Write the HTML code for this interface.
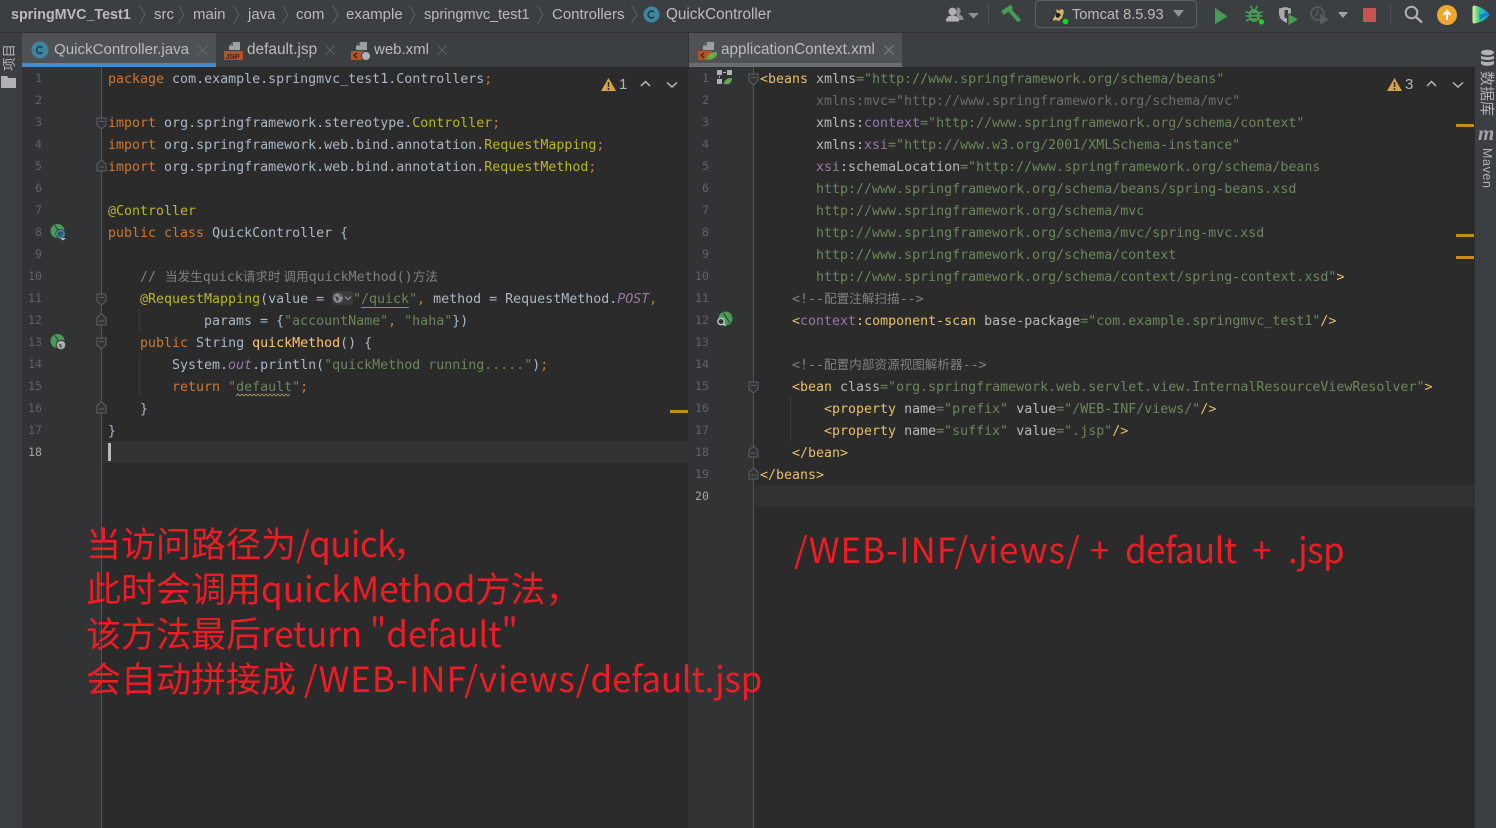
<!DOCTYPE html>
<html lang="zh"><head><meta charset="utf-8"><title>QuickController</title>
<style>
html,body{margin:0;padding:0;background:#2b2b2b}
#p{position:relative;width:1496px;height:828px;overflow:hidden;background:#2b2b2b;font-family:"Liberation Sans","Noto Sans CJK SC",sans-serif}
.a{position:absolute;white-space:nowrap}
.b{position:absolute}
.ui{font-size:15px;color:#bbb;line-height:20px}
.cr{position:absolute;top:5px}
.l{position:absolute;white-space:pre;height:22px;line-height:22px;margin-top:2px;font-family:"DejaVu Sans Mono","Noto Sans CJK SC",monospace;font-size:13.3px;color:#a9b7c6}
.l.cj{margin-top:0}
.l i.z{font-family:"Noto Sans CJK SC",sans-serif;font-style:normal;font-size:12.6px}
.n{position:absolute;width:30px;text-align:right;height:22px;line-height:22px;font-family:"DejaVu Sans Mono",monospace;font-size:11.6px;color:#606366}
.k{color:#cc7832}.s{color:#6a8759}.an{color:#bbb529}.m{color:#ffc66d}.c{color:#808080}.t{color:#e8bf6a}.at{color:#bababa}.ns{color:#9876aa}.g{color:#6c6c6c}
.red{position:absolute;white-space:nowrap;color:#ee1c25;font-family:"Noto Sans CJK SC","Liberation Sans",sans-serif;font-size:35px;line-height:45px}
</style></head><body><div id="p">

<!-- top bar -->
<div class="b" style="left:0;top:0;width:1496px;height:32px;background:#3c3f41"></div>
<div class="b" style="left:0;top:32px;width:1496px;height:1px;background:#323232"></div>
<div class="a ui" style="left:11px;top:5px;font-weight:bold;font-size:14.3px;color:#bbb">springMVC_Test1</div>
<svg class="cr" style="left:139px" width="7" height="19"><path d="M.5 .5 6 9.500.5 18.500" fill="none" stroke="#5d6163"/></svg>
<div class="a ui" style="left:154px;top:5px">src</div>
<svg class="cr" style="left:178px" width="7" height="19"><path d="M.5 .5 6 9.500.5 18.500" fill="none" stroke="#5d6163"/></svg>
<div class="a ui" style="left:193px;top:5px">main</div>
<svg class="cr" style="left:233px" width="7" height="19"><path d="M.5 .5 6 9.500.5 18.500" fill="none" stroke="#5d6163"/></svg>
<div class="a ui" style="left:248px;top:5px">java</div>
<svg class="cr" style="left:282px" width="7" height="19"><path d="M.5 .5 6 9.500.5 18.500" fill="none" stroke="#5d6163"/></svg>
<div class="a ui" style="left:296px;top:5px">com</div>
<svg class="cr" style="left:332px" width="7" height="19"><path d="M.5 .5 6 9.500.5 18.500" fill="none" stroke="#5d6163"/></svg>
<div class="a ui" style="left:346px;top:5px">example</div>
<svg class="cr" style="left:409px" width="7" height="19"><path d="M.5 .5 6 9.500.5 18.500" fill="none" stroke="#5d6163"/></svg>
<div class="a ui" style="left:424px;top:5px;font-size:14.500px">springmvc_test1</div>
<svg class="cr" style="left:537px" width="7" height="19"><path d="M.5 .5 6 9.500.5 18.500" fill="none" stroke="#5d6163"/></svg>
<div class="a ui" style="left:552px;top:5px">Controllers</div>
<svg class="cr" style="left:631px" width="7" height="19"><path d="M.5 .5 6 9.500.5 18.500" fill="none" stroke="#5d6163"/></svg>
<svg class="b" style="left:643px;top:6px" width="17" height="17" viewBox="0 0 17 17"><circle cx="8.500" cy="8.500" r="8" fill="#3e86a0"/><path d="M11 6.200A3.400 3.400 0 1 0 11 10.800" fill="none" stroke="#1f3d4a" stroke-width="1.600"/></svg>
<div class="a ui" style="left:666px;top:5px;font-size:15.300px">QuickController</div>

<!-- toolbar -->
<svg class="b" style="left:946px;top:6px" width="33" height="18" viewBox="0 0 33 18"><path d="M11 1.500a3.800 3.800 0 0 1 2 7c2.500.6 4.500 2 4.500 5.500H12c0-3-1-4.500-2-5.500z" fill="#8d8f91"/><circle cx="6.500" cy="5.500" r="3.900" fill="#afb1b3"/><path d="M0 15.500c0-4.500 2.500-6 6.500-6s6.500 1.500 6.500 6z" fill="#afb1b3"/><path d="M22 7h11l-5.500 5.500z" fill="#8d8f91"/></svg>
<div class="b" style="left:988px;top:3px;width:1px;height:22px;background:#515151"></div>
<svg class="b" style="left:1001px;top:5px" width="20" height="18" viewBox="0 0 20 18"><path d="M1.500 8 11 1.500" stroke="#499c54" stroke-width="4.500"/><path d="M7.500 4 18.500 16" stroke="#499c54" stroke-width="4"/></svg>
<div class="b" style="left:1035px;top:0;width:160px;height:26px;border:1px solid #5e6060;border-radius:4px;background:#3c3f41"></div>
<svg class="b" style="left:1048px;top:6px" width="22" height="20" viewBox="0 0 22 20"><path d="M1 14c3 0 4.500-1 6-4l2-3-1-4 3 1.500L14 3l2 .500-.5 4L14 12l-3 3-3-1-4 1z" fill="#d1b268"/><path d="M8 7h3l2 2-3 3-2-1zM1 14l4-1-1 3zM15 4l1-2 .5 3z" fill="#1d1d1d"/><circle cx="17.500" cy="15.500" r="2.800" fill="#14d61e"/></svg>
<div class="a ui" style="left:1072px;top:5px;color:#bbb;font-size:14.600px">Tomcat 8.5.93</div>
<svg class="b" style="left:1173px;top:10px" width="12" height="8"><path d="M0 0h11L5.500 7z" fill="#8f9294"/></svg>
<svg class="b" style="left:1215px;top:8px" width="14" height="17"><path d="M0 0l12.500 8.500L0 16z" fill="#499c54"/></svg>
<svg class="b" style="left:1245px;top:5px" width="20" height="20" viewBox="0 0 20 20"><ellipse cx="9" cy="10.500" rx="5.500" ry="6.500" fill="#499c54"/><path d="M.5 6.500l4 2M17.500 6.500l-4 2M.5 11h4M17.500 11h-4M1 16l3.500-2M17 16l-3.500-2M5.500 1l2 3M12.500 1l-2 3" stroke="#499c54" stroke-width="1.600"/><path d="M6 9h6M6 12.500h6" stroke="#3c3f41" stroke-width="1.500"/><circle cx="16.500" cy="17" r="2.600" fill="#14d61e"/></svg>
<svg class="b" style="left:1279px;top:6px" width="20" height="19" viewBox="0 0 20 19"><path d="M0 2.500 6.500 1l5.500 1.500v5L8 8v9C3 15 0 12 0 7z" fill="#a8aaac"/><path d="M5.500 4H9v9l-3.500-1.500z" fill="#3c3f41"/><path d="M9.500 8l9.500 5.500-9.500 5.500z" fill="#499c54"/></svg>
<svg class="b" style="left:1310px;top:6px" width="20" height="19" viewBox="0 0 20 19"><circle cx="7.500" cy="7.500" r="6.300" fill="none" stroke="#5a5d60" stroke-width="1.600"/><path d="M7.500 3.500v4l-2.500 3" fill="none" stroke="#5a5d60" stroke-width="1.400"/><path d="M10 8l9 5.500-9 5.500z" fill="#5a5d60"/></svg>
<svg class="b" style="left:1338px;top:12px" width="11" height="7"><path d="M0 0h10L5 6z" fill="#a0a2a4"/></svg>
<div class="b" style="left:1363px;top:8px;width:13px;height:14px;background:#c75450"></div>
<div class="b" style="left:1390px;top:3px;width:1px;height:22px;background:#515151"></div>
<svg class="b" style="left:1404px;top:5px" width="19" height="19" viewBox="0 0 19 19"><circle cx="7.500" cy="7.500" r="5.800" fill="none" stroke="#afb1b3" stroke-width="2"/><path d="M12 12l6 5.500" stroke="#afb1b3" stroke-width="2.400"/></svg>
<svg class="b" style="left:1437px;top:5px" width="20" height="20" viewBox="0 0 20 20"><circle cx="10" cy="10" r="10" fill="#f0a732"/><path d="M10 15V7M6.500 10 10 6l3.500 4" fill="none" stroke="#fff" stroke-width="2"/></svg>
<svg class="b" style="left:1472px;top:5px" width="18" height="19" viewBox="0 0 18 19"><defs><linearGradient id="jb" x1="0" y1="0" x2="1" y2="0"><stop offset="0" stop-color="#e6f29c"/><stop offset=".4" stop-color="#3fc98a"/><stop offset=".75" stop-color="#12a7dd"/><stop offset="1" stop-color="#1577d8"/></linearGradient></defs><path d="M2.500.5C8 1.500 13 4.500 16.500 8c1 1 1 2.500 0 3.500C13 15 8 17.500 2.500 18.500 1 18.500.5 17.500.5 16V3C.5 1.500 1 .5 2.500.5z" fill="url(#jb)"/><path d="M7 9.500l10-1.500-9 7z" fill="#0b72b9" opacity=".7"/></svg>

<!-- tab bar -->
<div class="b" style="left:0;top:33px;width:1475px;height:34px;background:#3c3f41"></div>
<div class="b" style="left:22px;top:33px;width:194px;height:30px;background:#4e5254"></div>
<div class="b" style="left:22px;top:63px;width:194px;height:4px;background:#4a88c7"></div>
<svg class="b" style="left:31px;top:41px" width="18" height="18" viewBox="0 0 18 18"><circle cx="9" cy="9" r="8.500" fill="#3e86a0"/><path d="M11.500 6.800A3.400 3.400 0 1 0 11.500 11.200" fill="none" stroke="#1f3d4a" stroke-width="1.600"/></svg>
<div class="a ui" style="left:54px;top:40px;color:#bbb;font-size:15.100px">QuickController.java</div>
<svg class="b" style="left:198px;top:45px" width="10" height="10"><path d="M0 0l10 10M10 0 0 10" stroke="#65686a" stroke-width="1"/></svg>
<svg class="b" style="left:224px;top:41px" width="20" height="20" viewBox="0 0 20 20"><path d="M5 9V5l4-4h7v8z" fill="#9da0a2"/><path d="M6 4.500 9 1.500v3z" fill="#4b4e50"/><rect x="0" y="10" width="19" height="9" fill="#b9521f"/><text x="1.500" y="18" font-family="Liberation Sans" font-size="7.500" font-weight="bold" fill="#2b2b2b">JSP</text></svg>
<div class="a ui" style="left:247px;top:40px;color:#bbb;font-size:15.400px">default.jsp</div>
<svg class="b" style="left:325px;top:45px" width="10" height="10"><path d="M0 0l10 10M10 0 0 10" stroke="#5d6062" stroke-width="1"/></svg>
<svg class="b" style="left:351px;top:41px" width="20" height="20" viewBox="0 0 20 20"><path d="M5 9V5l4-4h7v8z" fill="#9da0a2"/><path d="M6 4.500 9 1.500v3z" fill="#4b4e50"/><rect x="0" y="10" width="14" height="9" fill="#b9521f"/><path d="M6 12l-3 2.500 3 2.500" fill="none" stroke="#2b2b2b" stroke-width="1.400"/><circle cx="15" cy="15" r="4.500" fill="#afb1b3" stroke="#3c3f41"/></svg>
<div class="a ui" style="left:374px;top:40px;color:#bbb">web.xml</div>
<svg class="b" style="left:437px;top:45px" width="10" height="10"><path d="M0 0l10 10M10 0 0 10" stroke="#5d6062" stroke-width="1"/></svg>

<div class="b" style="left:688px;top:33px;width:1px;height:795px;background:#323232"></div>
<div class="b" style="left:689px;top:33px;width:213px;height:30px;background:#4e5254"></div>
<div class="b" style="left:689px;top:63px;width:213px;height:4px;background:#6b6e70"></div>
<svg class="b" style="left:698px;top:41px" width="20" height="20" viewBox="0 0 20 20"><path d="M5 9V5l4-4h7v8z" fill="#9da0a2"/><path d="M6 4.500 9 1.500v3z" fill="#4b4e50"/><rect x="0" y="10" width="14" height="9" fill="#b9521f"/><path d="M6 12l-3 2.500 3 2.500" fill="none" stroke="#2b2b2b" stroke-width="1.400"/><path d="M9 18c0-5 4-7 10-7 0 6-4 8-10 7z" fill="#6aa84f"/></svg>
<div class="a ui" style="left:721px;top:40px;color:#bbb;font-size:15.300px">applicationContext.xml</div>
<svg class="b" style="left:884px;top:45px" width="10" height="10"><path d="M0 0l10 10M10 0 0 10" stroke="#7d8082" stroke-width="1"/></svg>

<!-- left strip -->
<div class="b" style="left:0;top:33px;width:22px;height:795px;background:#3c3f41"></div>
<div class="a" style="left:1px;top:44px;color:#afb1b3;font-size:13.500px;line-height:14px;writing-mode:vertical-rl;text-orientation:sideways;transform:rotate(180deg);font-family:'Noto Sans CJK SC',sans-serif">项目</div>
<svg class="b" style="left:1px;top:76px" width="15" height="12"><path d="M0 0h6l1.500 2H15v10H0z" fill="#afb1b3"/></svg>

<!-- right strip -->
<div class="b" style="left:1475px;top:33px;width:21px;height:795px;background:#3c3f41"></div>
<svg class="b" style="left:1480px;top:49px" width="15" height="19" viewBox="0 0 15 19"><ellipse cx="7.500" cy="3.500" rx="6.500" ry="2.800" fill="#afb1b3"/><path d="M1 6.500c1 2 12 2 13 0v3c-1 2-12 2-13 0zM1 11.500c1 2 12 2 13 0v3c-1 3-12 3-13 0z" fill="#afb1b3"/></svg>
<div class="a" style="left:1479px;top:71px;color:#afb1b3;font-size:15px;line-height:16px;writing-mode:vertical-rl;text-orientation:sideways;font-family:'Noto Sans CJK SC',sans-serif">数据库</div>
<div class="a" style="left:1478px;top:121px;color:#a0a2a4;font-size:21px;line-height:24px;font-weight:bold;font-style:italic;font-family:'Liberation Serif',serif">m</div>
<div class="a" style="left:1479px;top:148px;color:#afb1b3;font-size:12.500px;line-height:16px;writing-mode:vertical-rl;letter-spacing:.6px">Maven</div>

<!-- gutters -->
<div class="b" style="left:22px;top:67px;width:80px;height:761px;background:#313335"></div>
<div class="b" style="left:689px;top:67px;width:65px;height:761px;background:#313335"></div>
<div class="b" style="left:101px;top:67px;width:1px;height:761px;background:#555"></div>
<div class="b" style="left:753px;top:67px;width:1px;height:761px;background:#555"></div>
<div class="b" style="left:102px;top:441px;width:586px;height:22px;background:#323232"></div>
<div class="b" style="left:754px;top:485px;width:721px;height:22px;background:#323232"></div>

<!-- indent guides -->
<div class="b" style="left:139px;top:309px;width:1px;height:22px;background:#3b3b3b"></div>
<div class="b" style="left:139px;top:353px;width:1px;height:44px;background:#3b3b3b"></div>
<div class="b" style="left:790px;top:397px;width:1px;height:44px;background:#3b3b3b"></div>

<!-- left numbers -->
<div class="n" style="left:12px;top:67px">1</div><div class="n" style="left:12px;top:89px">2</div><div class="n" style="left:12px;top:111px">3</div><div class="n" style="left:12px;top:133px">4</div><div class="n" style="left:12px;top:155px">5</div><div class="n" style="left:12px;top:177px">6</div><div class="n" style="left:12px;top:199px">7</div><div class="n" style="left:12px;top:221px">8</div><div class="n" style="left:12px;top:243px">9</div><div class="n" style="left:12px;top:265px">10</div><div class="n" style="left:12px;top:287px">11</div><div class="n" style="left:12px;top:309px">12</div><div class="n" style="left:12px;top:331px">13</div><div class="n" style="left:12px;top:353px">14</div><div class="n" style="left:12px;top:375px">15</div><div class="n" style="left:12px;top:397px">16</div><div class="n" style="left:12px;top:419px">17</div><div class="n" style="left:12px;top:441px;color:#a4a3a3">18</div>

<!-- left code -->
<div class="l" style="left:108px;top:67px"><span class="k">package</span> com.example.springmvc_test1.Controllers<span class="k">;</span></div>
<div class="l" style="left:108px;top:111px"><span class="k">import</span> org.springframework.stereotype.<span class="an">Controller</span><span class="k">;</span></div>
<div class="l" style="left:108px;top:133px"><span class="k">import</span> org.springframework.web.bind.annotation.<span class="an">RequestMapping</span><span class="k">;</span></div>
<div class="l" style="left:108px;top:155px"><span class="k">import</span> org.springframework.web.bind.annotation.<span class="an">RequestMethod</span><span class="k">;</span></div>
<div class="l" style="left:108px;top:199px"><span class="an">@Controller</span></div>
<div class="l" style="left:108px;top:221px"><span class="k">public class</span> QuickController {</div>
<div class="l" style="left:140px;top:265px;color:#808080">//</div>
<div class="l cj" style="left:165px;top:265px;color:#808080"><i class="z">当发生</i>quick<i class="z">请求时 调用</i>quickMethod()<i class="z">方法</i></div>
<div class="l" style="left:140px;top:287px"><span class="an">@RequestMapping</span>(value =</div>
<div class="b" style="left:332px;top:291px;width:21px;height:14px;background:#3b3b3b;border-radius:3px"></div>
<svg class="b" style="left:333px;top:293px" width="20" height="10" viewBox="0 0 20 10"><circle cx="5" cy="5" r="4.800" fill="#8b8d8f"/><path d="M2 3l3 1 1 3-2 1zM6 1l3 2-2 1z" fill="#3b3b3b"/><path d="M12 3.500l3 3 3-3" fill="none" stroke="#8b8d8f" stroke-width="1.200"/></svg>
<div class="l s" style="left:353px;top:287px;color:#6a8759">"<span style="border-bottom:1px solid #6d8fc4">/quick</span>"<span class="k">,</span> <span style="color:#a9b7c6">method = RequestMethod.</span><span class="ns" style="font-style:italic">POST</span><span class="k">,</span></div>
<div class="l" style="left:204px;top:309px">params = {<span class="s">"accountName"</span><span class="k">,</span> <span class="s">"haha"</span>})</div>
<div class="l" style="left:140px;top:331px"><span class="k">public</span> String <span class="m">quickMethod</span>() {</div>
<div class="l" style="left:172px;top:353px">System.<span class="ns" style="font-style:italic">out</span>.println(<span class="s">"quickMethod running....."</span>)<span class="k">;</span></div>
<div class="l" style="left:172px;top:375px"><span class="k">return</span> <span class="s">"default"</span><span class="k">;</span></div>
<svg class="b" style="left:236px;top:393px" width="57" height="4"><path d="M0 3l2-2 2 2 2-2 2 2 2-2 2 2 2-2 2 2 2-2 2 2 2-2 2 2 2-2 2 2 2-2 2 2 2-2 2 2 2-2 2 2 2-2 2 2 2-2 2 2 2-2 2 2 2-2" fill="none" stroke="#a9a26a" stroke-width=".8"/></svg>
<div class="l" style="left:140px;top:397px">}</div>
<div class="l" style="left:108px;top:419px">}</div>
<div class="b" style="left:108px;top:443px;width:3px;height:18px;background:#bbb"></div>

<!-- left fold markers -->
<svg class="b" style="left:96px;top:117px" width="11" height="14"><path d="M1 1h9v7l-4.500 4L1 8z" fill="#313335" stroke="#5f6264"/><path d="M3 4.500h5" stroke="#5f6264"/></svg>
<svg class="b" style="left:96px;top:158px" width="11" height="14"><path d="M1 13h9V6L5.500 2 1 6z" fill="#313335" stroke="#5f6264"/><path d="M3 9h5" stroke="#5f6264"/></svg>
<svg class="b" style="left:96px;top:293px" width="11" height="14"><path d="M1 1h9v7l-4.500 4L1 8z" fill="#313335" stroke="#5f6264"/><path d="M3 4.500h5" stroke="#5f6264"/></svg>
<svg class="b" style="left:96px;top:312px" width="11" height="14"><path d="M1 13h9V6L5.500 2 1 6z" fill="#313335" stroke="#5f6264"/><path d="M3 9h5" stroke="#5f6264"/></svg>
<svg class="b" style="left:96px;top:337px" width="11" height="14"><path d="M1 1h9v7l-4.500 4L1 8z" fill="#313335" stroke="#5f6264"/><path d="M3 4.500h5" stroke="#5f6264"/></svg>
<svg class="b" style="left:96px;top:400px" width="11" height="14"><path d="M1 13h9V6L5.500 2 1 6z" fill="#313335" stroke="#5f6264"/><path d="M3 9h5" stroke="#5f6264"/></svg>

<!-- left gutter icons -->
<svg class="b" style="left:50px;top:224px" width="17" height="17" viewBox="0 0 17 17"><circle cx="7.500" cy="7" r="7" fill="#499c54"/><path d="M5 1.500 12 13" stroke="#313335" stroke-width="1"/><circle cx="10.500" cy="10" r="4.800" fill="#3e86a0" stroke="#313335" stroke-width=".6"/><path d="M8.500 10h4M12.500 10a2 2 0 1 0-.7 1.600" fill="none" stroke="#1f3d4a"/><path d="M10 14h6l-3 2.500z" fill="#bbb"/></svg>
<svg class="b" style="left:50px;top:334px" width="17" height="17" viewBox="0 0 17 17"><circle cx="7.500" cy="7" r="7" fill="#499c54"/><path d="M5 1.500 12 13" stroke="#313335" stroke-width="1"/><circle cx="11" cy="11" r="4.800" fill="#afb1b3" stroke="#313335"/><path d="M8.500 9.500l3 1 .5 3-2 .5z" fill="#5a5d5f"/></svg>

<!-- warnings left -->
<svg class="b" style="left:601px;top:78px" width="15" height="13"><path d="M7.500 0 15 13H0z" fill="#d6a73c"/><path d="M7.500 4v5M7.500 10v2" stroke="#2b2b2b" stroke-width="1.500"/></svg>
<div class="a ui" style="left:619px;top:75px;font-size:15px;color:#a9b7c6">1</div>
<svg class="b" style="left:640px;top:80px" width="11" height="8"><path d="M1 6l4.500-4.500L10 6" fill="none" stroke="#bbb" stroke-width="1.500"/></svg>
<svg class="b" style="left:666px;top:81px" width="12" height="8"><path d="M1 1.500 6 6l5-4.500" fill="none" stroke="#bbb" stroke-width="1.500"/></svg>
<div class="b" style="left:670px;top:410px;width:18px;height:3px;background:#be9117"></div>

<!-- right numbers -->
<div class="n" style="left:679px;top:67px">1</div><div class="n" style="left:679px;top:89px">2</div><div class="n" style="left:679px;top:111px">3</div><div class="n" style="left:679px;top:133px">4</div><div class="n" style="left:679px;top:155px">5</div><div class="n" style="left:679px;top:177px">6</div><div class="n" style="left:679px;top:199px">7</div><div class="n" style="left:679px;top:221px">8</div><div class="n" style="left:679px;top:243px">9</div><div class="n" style="left:679px;top:265px">10</div><div class="n" style="left:679px;top:287px">11</div><div class="n" style="left:679px;top:309px">12</div><div class="n" style="left:679px;top:331px">13</div><div class="n" style="left:679px;top:353px">14</div><div class="n" style="left:679px;top:375px">15</div><div class="n" style="left:679px;top:397px">16</div><div class="n" style="left:679px;top:419px">17</div><div class="n" style="left:679px;top:441px">18</div><div class="n" style="left:679px;top:463px">19</div><div class="n" style="left:679px;top:485px;color:#a4a3a3">20</div>

<!-- right code -->
<div class="l" style="left:760px;top:67px"><span class="t">&lt;beans</span> <span class="at">xmlns</span><span class="s">="http://www.springframework.org/schema/beans"</span></div>
<div class="l g" style="left:816px;top:89px;color:#6c6c6c">xmlns:mvc="http://www.springframework.org/schema/mvc"</div>
<div class="l" style="left:816px;top:111px"><span class="at">xmlns:</span><span class="ns">context</span><span class="s">="http://www.springframework.org/schema/context"</span></div>
<div class="l" style="left:816px;top:133px"><span class="at">xmlns:</span><span class="ns">xsi</span><span class="s">="http://www.w3.org/2001/XMLSchema-instance"</span></div>
<div class="l" style="left:816px;top:155px"><span class="ns">xsi</span><span class="at">:schemaLocation</span><span class="s">="http://www.springframework.org/schema/beans</span></div>
<div class="l s" style="left:816px;top:177px;color:#6a8759">http://www.springframework.org/schema/beans/spring-beans.xsd</div>
<div class="l s" style="left:816px;top:199px;color:#6a8759">http://www.springframework.org/schema/mvc</div>
<div class="l s" style="left:816px;top:221px;color:#6a8759">http://www.springframework.org/schema/mvc/spring-mvc.xsd</div>
<div class="l s" style="left:816px;top:243px;color:#6a8759">http://www.springframework.org/schema/context</div>
<div class="l s" style="left:816px;top:265px;color:#6a8759">http://www.springframework.org/schema/context/spring-context.xsd"<span class="t">&gt;</span></div>
<div class="l cj" style="left:792px;top:287px;color:#808080">&lt;!--<i class="z">配置注解扫描</i>--&gt;</div>
<div class="l" style="left:792px;top:309px"><span class="t">&lt;</span><span class="ns">context</span><span class="t">:component-scan</span> <span class="at">base-package</span><span class="s">="com.example.springmvc_test1"</span><span class="t">/&gt;</span></div>
<div class="l cj" style="left:792px;top:353px;color:#808080">&lt;!--<i class="z">配置内部资源视图解析器</i>--&gt;</div>
<div class="l" style="left:792px;top:375px"><span class="t">&lt;bean</span> <span class="at">class</span><span class="s">="org.springframework.web.servlet.view.InternalResourceViewResolver"</span><span class="t">&gt;</span></div>
<div class="l" style="left:824px;top:397px"><span class="t">&lt;property</span> <span class="at">name</span><span class="s">="prefix"</span> <span class="at">value</span><span class="s">="/WEB-INF/views/"</span><span class="t">/&gt;</span></div>
<div class="l" style="left:824px;top:419px"><span class="t">&lt;property</span> <span class="at">name</span><span class="s">="suffix"</span> <span class="at">value</span><span class="s">=".jsp"</span><span class="t">/&gt;</span></div>
<div class="l" style="left:792px;top:441px"><span class="t">&lt;/bean&gt;</span></div>
<div class="l" style="left:760px;top:463px"><span class="t">&lt;/beans&gt;</span></div>

<!-- right fold markers -->
<svg class="b" style="left:748px;top:73px" width="11" height="14"><path d="M1 1h9v7l-4.500 4L1 8z" fill="#313335" stroke="#5f6264"/><path d="M3 4.500h5" stroke="#5f6264"/></svg>
<svg class="b" style="left:748px;top:381px" width="11" height="14"><path d="M1 1h9v7l-4.500 4L1 8z" fill="#313335" stroke="#5f6264"/><path d="M3 4.500h5" stroke="#5f6264"/></svg>
<svg class="b" style="left:748px;top:444px" width="11" height="14"><path d="M1 13h9V6L5.500 2 1 6z" fill="#313335" stroke="#5f6264"/><path d="M3 9h5" stroke="#5f6264"/></svg>
<svg class="b" style="left:748px;top:466px" width="11" height="14"><path d="M1 13h9V6L5.500 2 1 6z" fill="#313335" stroke="#5f6264"/><path d="M3 9h5" stroke="#5f6264"/></svg>

<!-- right gutter icons -->
<svg class="b" style="left:717px;top:70px" width="16" height="16" viewBox="0 0 16 16"><rect x="0" y="0" width="5" height="5" fill="#afb1b3"/><rect x="10" y="0" width="5" height="5" fill="#afb1b3"/><rect x="0" y="9" width="5" height="5" fill="#afb1b3"/><path d="M6 2.500h3M2.500 6v2" stroke="#afb1b3"/><path d="M7 14c0-4 3-6 8-6 0 5-3 7-8 6z" fill="#6aa84f"/></svg>
<svg class="b" style="left:717px;top:311px" width="16" height="17" viewBox="0 0 16 17"><circle cx="8.500" cy="7.500" r="7" fill="#499c54"/><path d="M6 1.500 13 12" stroke="#313335" stroke-width="1"/><circle cx="4" cy="10.500" r="3.200" fill="#313335" stroke="#c8cacc" stroke-width="1.300"/><path d="M6.500 13l2 2" stroke="#c8cacc" stroke-width="1.500"/></svg>

<!-- warnings right -->
<svg class="b" style="left:1387px;top:78px" width="15" height="13"><path d="M7.500 0 15 13H0z" fill="#d6a73c"/><path d="M7.500 4v5M7.500 10v2" stroke="#2b2b2b" stroke-width="1.500"/></svg>
<div class="a ui" style="left:1405px;top:75px;font-size:15px;color:#a9b7c6">3</div>
<svg class="b" style="left:1426px;top:80px" width="11" height="8"><path d="M1 6l4.500-4.500L10 6" fill="none" stroke="#bbb" stroke-width="1.500"/></svg>
<svg class="b" style="left:1452px;top:81px" width="12" height="8"><path d="M1 1.500 6 6l5-4.500" fill="none" stroke="#bbb" stroke-width="1.500"/></svg>
<div class="b" style="left:1456px;top:124px;width:18px;height:3px;background:#be9117"></div>
<div class="b" style="left:1456px;top:234px;width:18px;height:3px;background:#be9117"></div>
<div class="b" style="left:1456px;top:256px;width:18px;height:3px;background:#be9117"></div>

<!-- red annotations -->
<div class="red" style="left:86px;top:520px">当访问路径为<span style="letter-spacing:-.6px">/quick</span><span style="margin-left:-3px">，</span></div>
<div class="red" style="left:86px;top:565px">此时会调用quickMethod方法，</div>
<div class="red" style="left:86px;top:610px">该方法最后<span style="letter-spacing:-.1px">return "default"</span></div>
<div class="red" style="left:86px;top:655px">会自动拼接成 <span style="letter-spacing:1px">/WEB-INF/views/</span><span style="letter-spacing:-.27px">default.jsp</span></div>
<div class="red" style="left:794px;top:526px;letter-spacing:1px">/WEB-INF/views/</div>
<div class="red" style="left:1090px;top:526px">+</div>
<div class="red" style="left:1125px;top:526px;letter-spacing:-.6px">default</div>
<div class="red" style="left:1252px;top:526px">+</div>
<div class="red" style="left:1288px;top:526px;letter-spacing:-.6px">.jsp</div>

</div></body></html>
